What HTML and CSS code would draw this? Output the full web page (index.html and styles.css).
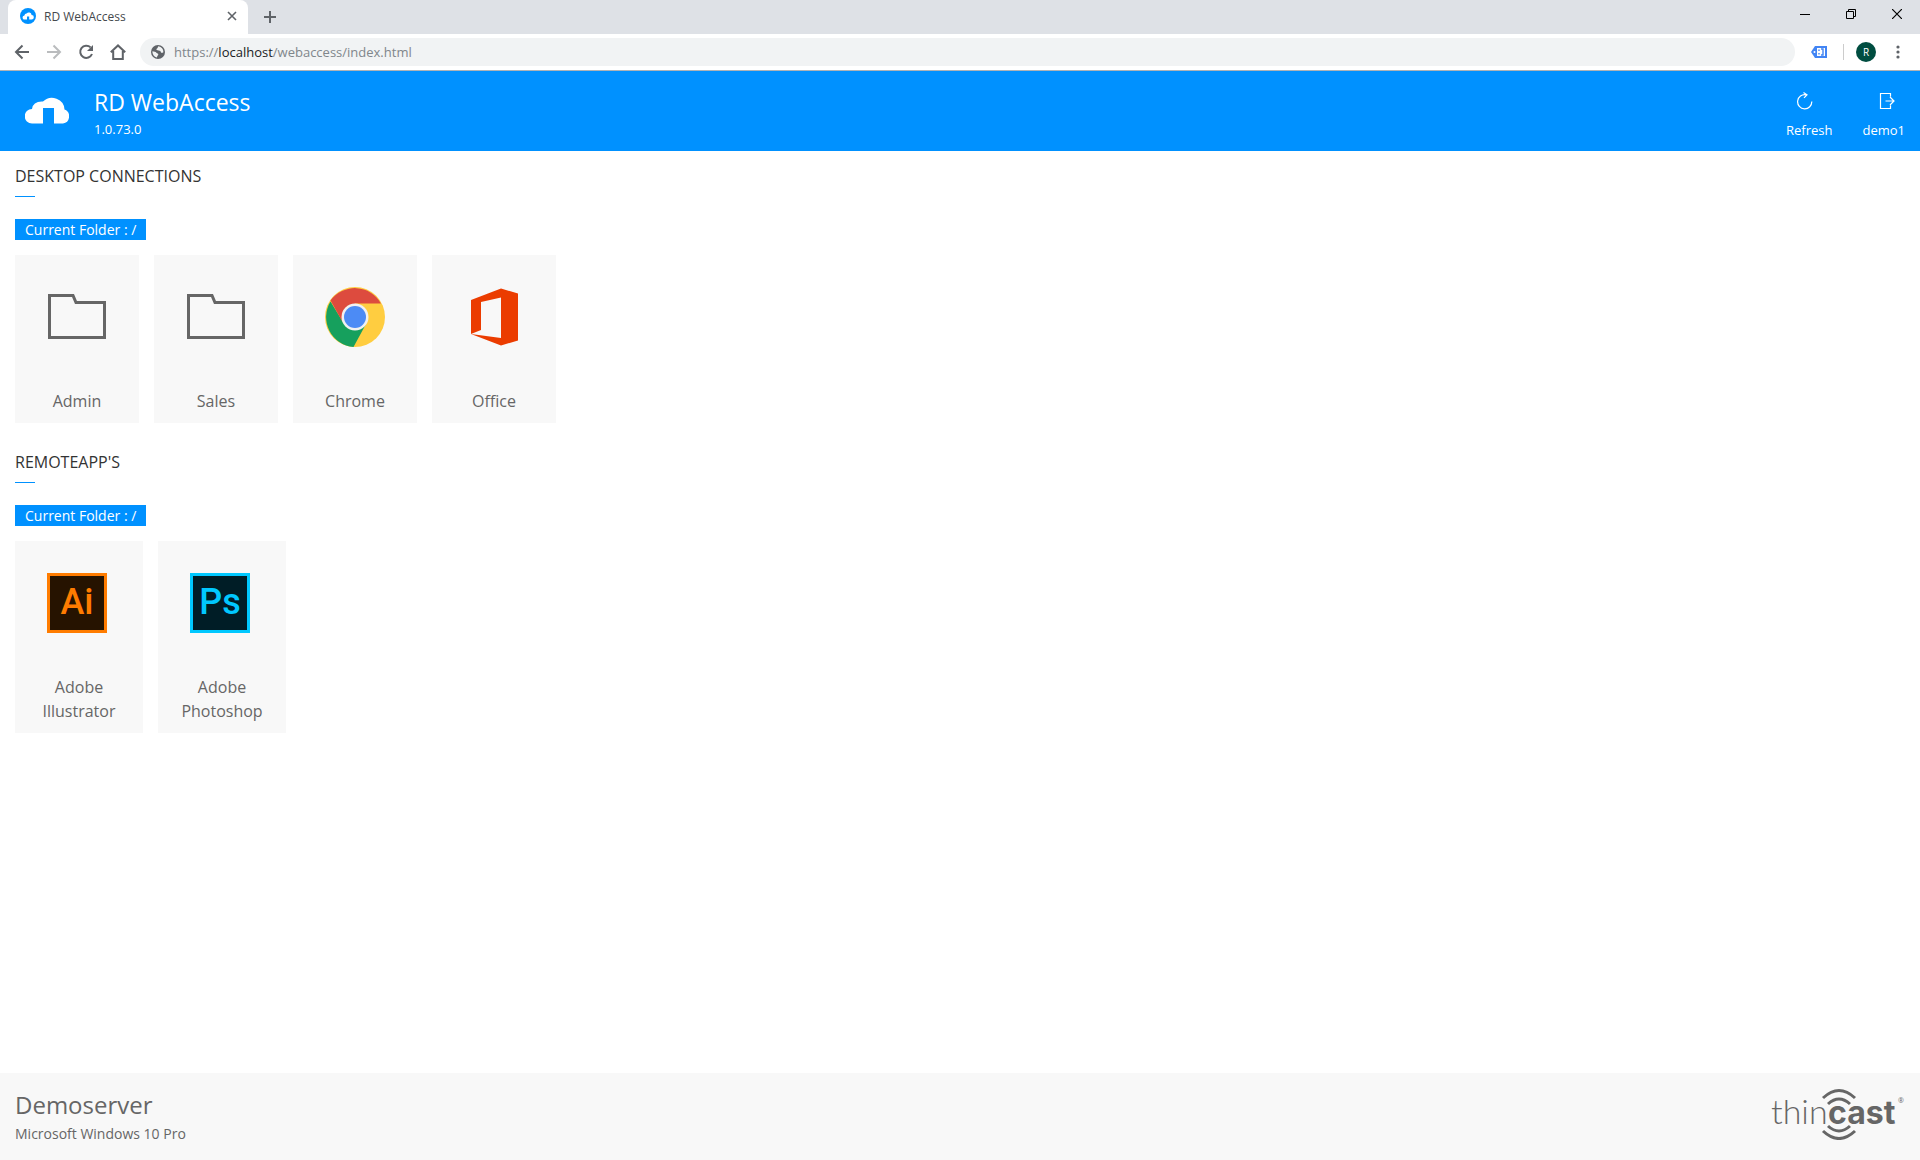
FILE: index.html
```html
<!DOCTYPE html>
<html lang="en">
<head>
    <meta charset="UTF-8">
    <meta name="viewport" content="width=device-width, initial-scale=1.0">
    <title>RD WebAccess</title>
    <link rel="stylesheet" href="styles.css">
</head>
<body>
    <!-- Browser window -->
    <div class="tabstrip">
        <div class="tab">
            <svg class="favicon" width="16" height="16" viewBox="0 0 16 16">
                <circle cx="8" cy="8" r="8" fill="#0091ff"/>
                <path d="M7 11.500H4.800A2 2 0 0 1 4.400 7.400 2.200 2.200 0 0 1 6.600 5.400 2.900 2.900 0 0 1 11.600 6.900 2.300 2.300 0 0 1 11.500 11.500H9.200V8.500H7z" fill="#fff"/>
            </svg>
            <span class="tab-title">RD WebAccess</span>
            <button class="tab-close" aria-label="Close tab">
                <svg width="10" height="10" viewBox="0 0 10 10"><path d="M1 1l8 8M9 1l-8 8" stroke="#5f6368" stroke-width="1.600"/></svg>
            </button>
        </div>
        <button class="new-tab" aria-label="New tab">
            <svg width="12" height="12" viewBox="0 0 12 12"><path d="M6 0v12M0 6h12" stroke="#5f6368" stroke-width="2"/></svg>
        </button>
        <div class="window-buttons">
            <button aria-label="Minimize"><svg width="10" height="10" viewBox="0 0 10 10"><path d="M0 5.500h10" stroke="#000"/></svg></button>
            <button aria-label="Restore"><svg width="10" height="10" viewBox="0 0 10 10" fill="none" stroke="#000"><path d="M.5 2.500h7v7h-7zM2.500 2.500v-2h7v7h-2"/></svg></button>
            <button aria-label="Close"><svg width="10" height="10" viewBox="0 0 10 10"><path d="M0 0l10 10M10 0L0 10" stroke="#000" stroke-width="1.200"/></svg></button>
        </div>
    </div>
    <div class="toolbar">
        <button aria-label="Back"><svg width="16" height="16" viewBox="0 0 16 16" fill="none" stroke="#5f6368" stroke-width="2"><path d="M15 8H2.500M8.500 1.500L2 8l6.500 6.500"/></svg></button>
        <button aria-label="Forward"><svg width="16" height="16" viewBox="0 0 16 16" fill="none" stroke="#babcbe" stroke-width="2"><path d="M1 8h12.500M7.500 1.500L14 8l-6.500 6.500"/></svg></button>
        <button aria-label="Reload"><svg width="16" height="16" viewBox="0 0 16 16"><path d="M12.600 3.400A6.100 6.100 0 1 0 14 10" fill="none" stroke="#5f6368" stroke-width="2"/><path d="M15 1v6H9z" fill="#5f6368"/></svg></button>
        <button aria-label="Home"><svg width="16" height="16" viewBox="0 0 16 16" fill="none" stroke="#5f6368" stroke-width="2"><path d="M.8 8.300L8 1.500l7.200 6.800M3.200 7v8h9.600V7"/></svg></button>
        <div class="omnibox">
            <svg width="14" height="14" viewBox="0 0 14 14"><circle cx="7" cy="7" r="7" fill="#5f6368"/><path d="M7.500 1.300c-1 .6-.5 1.700-1.500 2.200s-.8 1.500.6 1.800 2.900.2 3.200 1.600 1.700.9 2.600.3A5.700 5.700 0 0 0 7.500 1.300zM1.400 6.300c1.700.2 3.200.4 4 1.400s1.900.4 1.900 1.600-1 1-1.400 3.200A5.700 5.700 0 0 1 1.400 6.300z" fill="#f1f3f4"/></svg>
            <span class="url">https://<b>localhost</b>/webaccess/index.html</span>
        </div>
        <button class="extension" aria-label="Extension"><svg width="16" height="12" viewBox="0 0 16 12"><path d="M0 6l4-6h12v12H4z" fill="#4285f4"/><path d="M6 2h8v8H6z" fill="#fff"/><path d="M8 3.500v1.500M8 7v1.500M10 3h2v6h-2" fill="none" stroke="#4285f4" stroke-width="1.400"/><circle cx="3.500" cy="6" r="1" fill="#fff"/></svg></button>
        <span class="divider"></span>
        <button class="avatar">R</button>
        <button class="menu" aria-label="Menu"><svg width="4" height="14" viewBox="0 0 4 14" fill="#5f6368"><circle cx="2" cy="2" r="1.600"/><circle cx="2" cy="7" r="1.600"/><circle cx="2" cy="12" r="1.600"/></svg></button>
    </div>

    <!-- Page header -->
    <header class="header">
        <svg class="cloud" width="44" height="28" viewBox="0 0 44 28"><path d="M18 27.500H7A7 7 0 0 1 7 13 Q8 5 18 5.500A12.500 12 0 0 1 39.500 13.500 7.300 7.300 0 0 1 38 27.500H29V12H18z" fill="#fff"/></svg>
        <div class="brand">
            <h1>RD WebAccess</h1>
            <p>1.0.73.0</p>
        </div>
        <nav class="actions">
            <button class="refresh">
                <svg width="18" height="18" viewBox="0 0 18 18" fill="none" stroke="#fff" stroke-width="1.200"><path d="M10 2.800A7.100 7.100 0 1 0 15.800 9.500M7.500 .5l3.500 2.300-3 3"/></svg>
                <span>Refresh</span>
            </button>
            <button class="logout">
                <svg width="18" height="18" viewBox="0 0 18 18" fill="none" stroke="#fff" stroke-width="1.200"><path d="M13.500 4.500v-3h-10v15h10v-3M8.500 9H17M13 5l4 4-4 4"/></svg>
                <span>demo1</span>
            </button>
        </nav>
    </header>

    <main class="content">
        <!-- Desktop connections -->
        <section class="group">
            <h2>Desktop Connections</h2>
            <span class="folder-path">Current Folder : /</span>
            <div class="cards">
                <a class="card" href="#">
                    <svg class="icon" width="60" height="60" viewBox="0 0 60 60"><path d="M2.500 8.500H26L29 15.500H57.500V50.500H2.500z" fill="none" stroke="#666" stroke-width="3"/></svg>
                    <span>Admin</span>
                </a>
                <a class="card" href="#">
                    <svg class="icon" width="60" height="60" viewBox="0 0 60 60"><path d="M2.500 8.500H26L29 15.500H57.500V50.500H2.500z" fill="none" stroke="#666" stroke-width="3"/></svg>
                    <span>Sales</span>
                </a>
                <a class="card" href="#">
                    <svg class="icon" width="60" height="60" viewBox="0 0 60 60">
                        <circle cx="30" cy="30" r="30" fill="#ffcd40"/>
                        <path d="M5.500 14.500A30 30 0 0 0 28.500 60L41 37 30 43 18.500 36z" fill="#16a05d"/>
                        <path d="M5.500 13.500A30 30 0 0 1 56 16.500H30L17 34z" fill="#dd4b3e"/>
                        <circle cx="30" cy="30" r="13.500" fill="#f1f1f1"/>
                        <circle cx="30" cy="30" r="11" fill="#4c8bf5"/>
                    </svg>
                    <span>Chrome</span>
                </a>
                <a class="card" href="#">
                    <svg class="icon" width="60" height="60" viewBox="0 0 60 60"><path d="M7 13L37 1.500 54 6.500V53.500L37 58.500 7 47 37 51V10.500L17 15V43L7 47z" fill="#eb3c00"/></svg>
                    <span>Office</span>
                </a>
            </div>
        </section>

        <!-- RemoteApps -->
        <section class="group">
            <h2>RemoteApp's</h2>
            <span class="folder-path">Current Folder : /</span>
            <div class="cards apps">
                <a class="card" href="#">
                    <b class="icon adobe ai">Ai</b>
                    <span>Adobe Illustrator</span>
                </a>
                <a class="card" href="#">
                    <b class="icon adobe ps">Ps</b>
                    <span>Adobe Photoshop</span>
                </a>
            </div>
        </section>
    </main>

    <footer class="footer">
        <div>
            <h3>Demoserver</h3>
            <p>Microsoft Windows 10 Pro</p>
        </div>
        <svg class="thincast" width="136" height="52" viewBox="0 0 136 52" fill="#666">
            <text class="thin" x="2" y="36">thin</text>
            <text class="cast" x="59" y="36">cast</text>
            <text class="reg" x="129" y="15">®</text>
            <g fill="none" stroke="#666" stroke-width="3">
                <path d="M54 10Q70 -5 86 10M59 16Q70 6 81 16M59 38Q70 48 81 38M54 43Q70 58 86 43"/>
            </g>
        </svg>
    </footer>
</body>
</html>
```
FILE: styles.css
```css
* {
    box-sizing: border-box;
}
body {
    font-family: "Open Sans", "Liberation Sans", sans-serif;
    display: flex;
    flex-direction: column;
    min-height: 100vh;
    margin: 0;
    color: #666;
    background-color: #fff;
}
h1, h2, h3, p {
    margin: 0;
    font-weight: 400;
}
button {
    padding: 0;
    border: none;
    background: none;
    font-family: inherit;
    color: inherit;
    cursor: pointer;
}
svg {
    display: block;
}

/* Browser window */
.tabstrip {
    display: flex;
    align-items: center;
    height: 34px;
    padding-left: 8px;
    background-color: #dee1e6;
}
.tab {
    display: flex;
    align-items: center;
    width: 240px;
    height: 34px;
    padding: 0 11px 2px 12px;
    border-radius: 8px 8px 0 0;
    background-color: #fff;
}
.tab-title {
    flex: 1;
    margin-left: 8px;
    font-size: 12px;
    color: #45494d;
}
.new-tab {
    margin-left: 16px;
}
.window-buttons {
    display: flex;
    align-self: flex-start;
    margin-left: auto;
}
.window-buttons button {
    display: flex;
    align-items: center;
    justify-content: center;
    width: 46px;
    height: 28px;
}
.toolbar {
    display: flex;
    align-items: center;
    height: 37px;
    padding: 0 20px 0 14px;
    gap: 16px;
    border-bottom: 1px solid #b0b3b6;
}
.omnibox {
    display: flex;
    flex: 1;
    align-items: center;
    gap: 9px;
    height: 28px;
    margin-left: -2px;
    padding-left: 11px;
    border-radius: 14px;
    background-color: #f1f3f4;
}
.url {
    font-size: 13px;
    color: #80868b;
}
.url b {
    font-weight: 400;
    color: #202124;
}
.divider {
    width: 1px;
    height: 16px;
    background-color: #ccc;
}
.avatar {
    width: 20px;
    height: 20px;
    margin: 0 4px 0 -4px;
    border-radius: 50%;
    background-color: #004d40;
    font-size: 10px;
    color: #fff;
}

/* Page header */
.header {
    display: flex;
    align-items: center;
    height: 80px;
    padding: 4px 15px 0 25px;
    background-color: #0091ff;
    color: #fff;
}
.cloud {
    margin-bottom: 6px;
}
.brand {
    margin-left: 25px;
}
.brand h1 {
    font-size: 23px;
    line-height: 32px;
}
.brand p {
    font-size: 13px;
    line-height: 22px;
}
.actions {
    display: flex;
    gap: 30px;
    margin-left: auto;
    padding-top: 6px;
}
.actions button {
    display: flex;
    flex-direction: column;
    align-items: center;
    gap: 10px;
    font-size: 13px;
    line-height: 20px;
}
.refresh svg {
    margin-right: 8px;
}
.logout svg {
    margin-left: 4px;
}

/* Groups of connections */
.content {
    flex: 1;
    padding: 15px;
}
.group {
    margin-bottom: 29px;
}
.group h2 {
    font-size: 16px;
    line-height: 20px;
    text-transform: uppercase;
    color: #333;
}
.group h2::after {
    content: "";
    display: block;
    width: 20px;
    height: 1px;
    margin: 10px 0 22px;
    background-color: #0091ff;
}
.folder-path {
    display: block;
    width: fit-content;
    padding: 0 10px;
    background-color: #0091ff;
    font-size: 14px;
    line-height: 21px;
    color: #fff;
}
.cards {
    display: flex;
    gap: 15px;
    margin-top: 15px;
}
.card {
    display: flex;
    flex-direction: column;
    align-items: center;
    width: 124px;
    padding: 32px 20px 10px;
    background-color: #f8f8f8;
    font-size: 16px;
    line-height: 24px;
    text-align: center;
    text-decoration: none;
    color: #666;
}
.card .icon {
    align-self: flex-start;
    margin-left: 12px;
}
.card span {
    margin-top: 42px;
}
.apps .card {
    width: 128px;
}
.adobe {
    width: 60px;
    height: 60px;
    border: 3px solid;
    font-family: Roboto, sans-serif;
    font-size: 36px;
    font-weight: 500;
    line-height: 52px;
}
.ai {
    background-color: #261300;
    color: #ff7c00;
}
.ps {
    background-color: #001d26;
    color: #00c8ff;
}

/* Footer */
.footer {
    display: flex;
    justify-content: space-between;
    padding: 15px;
    background-color: #f8f8f8;
}
.footer h3 {
    font-size: 24px;
    line-height: 34px;
}
.footer p {
    font-size: 14px;
    line-height: 23px;
}
.thin {
    font-family: Lato, sans-serif;
    font-size: 34px;
    font-weight: 300;
}
.cast {
    font-family: Inter, sans-serif;
    font-size: 32px;
    font-weight: 700;
}
.reg {
    font-size: 7px;
}
```
